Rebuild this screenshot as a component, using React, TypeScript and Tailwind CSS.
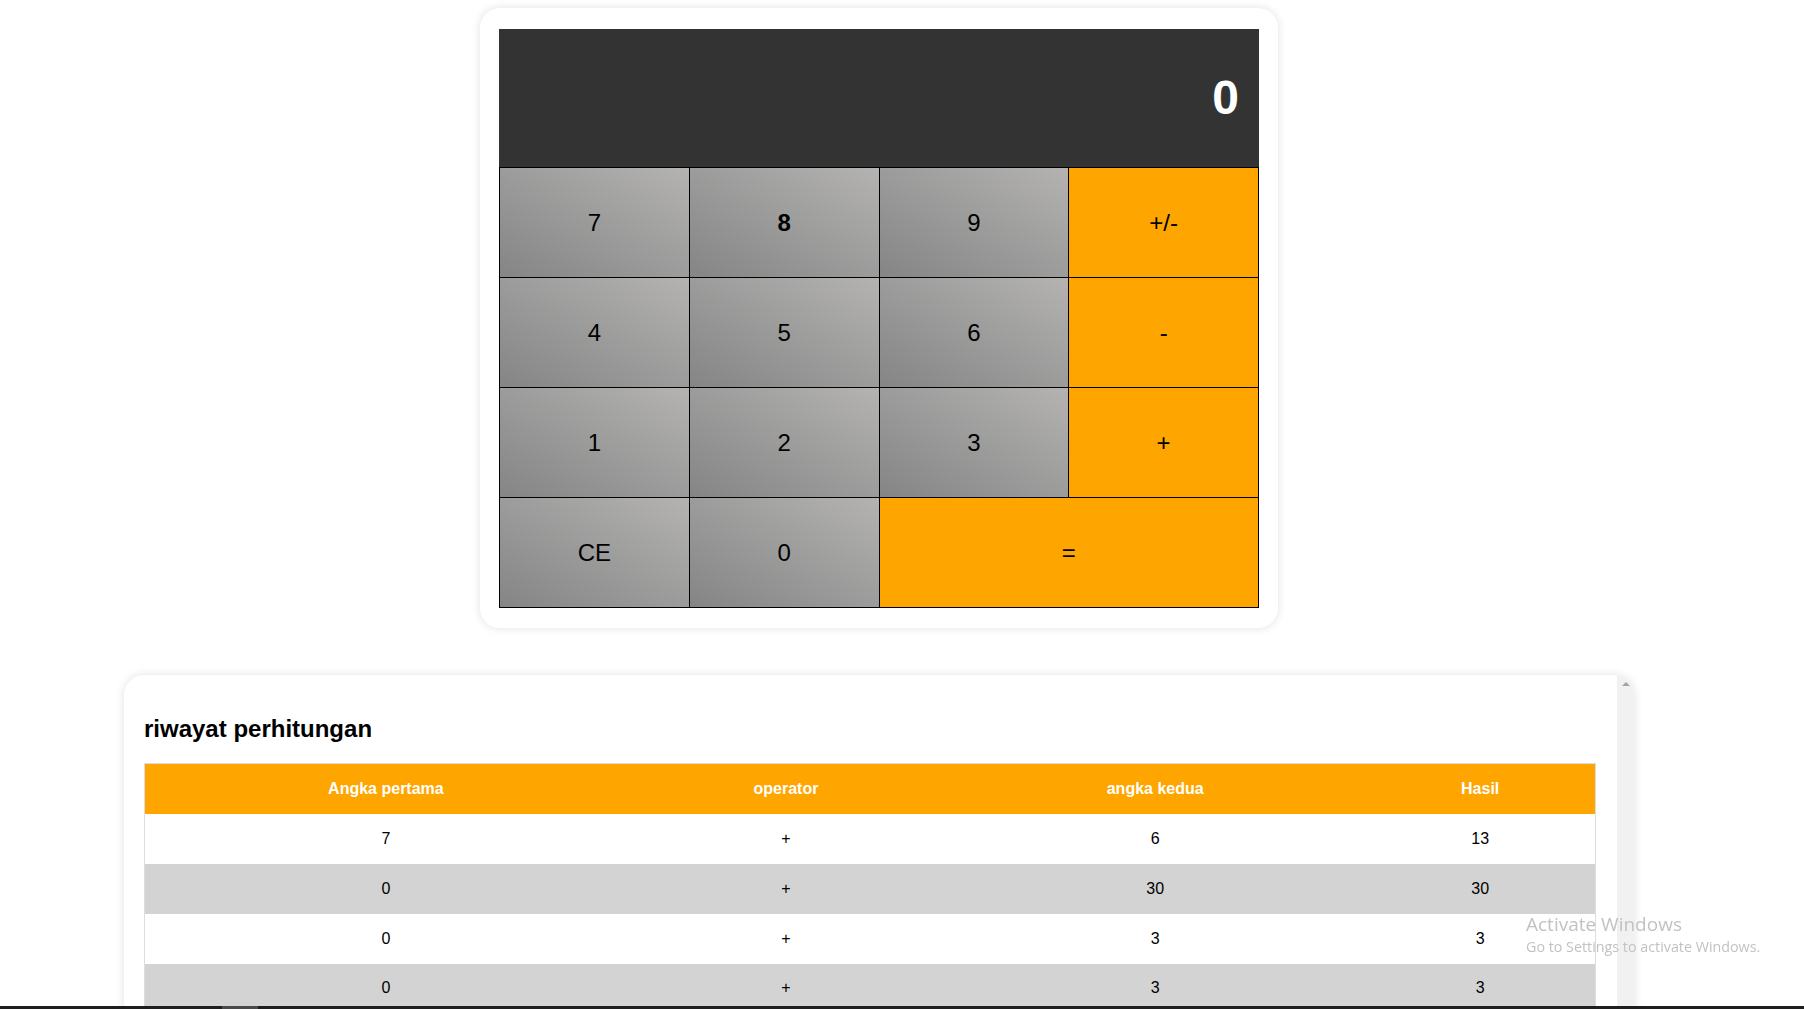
type Key = { label: string; kind: "num" | "op"; bold?: boolean; wide?: boolean };

const keys: Key[] = [
  { label: "7", kind: "num" },
  { label: "8", kind: "num", bold: true },
  { label: "9", kind: "num" },
  { label: "+/-", kind: "op" },
  { label: "4", kind: "num" },
  { label: "5", kind: "num" },
  { label: "6", kind: "num" },
  { label: "-", kind: "op" },
  { label: "1", kind: "num" },
  { label: "2", kind: "num" },
  { label: "3", kind: "num" },
  { label: "+", kind: "op" },
  { label: "CE", kind: "num" },
  { label: "0", kind: "num" },
  { label: "=", kind: "op", wide: true },
];

const history = [
  { a: "7", op: "+", b: "6", res: "13" },
  { a: "0", op: "+", b: "30", res: "30" },
  { a: "0", op: "+", b: "3", res: "3" },
  { a: "0", op: "+", b: "3", res: "3" },
];

function Calculator() {
  return (
    <div className="mt-[8px] rounded-[20px] bg-white px-[19px] pt-[21px] pb-[20px] shadow-[0_0_10px_rgba(0,0,0,0.12)]">
      <div className="flex h-[138px] w-[760px] items-center justify-end bg-[#333333] pr-[20px] text-[48px] font-bold text-white">
        0
      </div>
      <div className="grid w-[760px] grid-cols-4 grid-rows-[repeat(4,109px)] gap-px bg-black p-px">
        {keys.map((k) => (
          <button
            key={k.label}
            type="button"
            className={
              (k.kind === "op"
                ? "bg-[#ffa500] "
                : "bg-linear-to-tr from-[#858585] to-[#b4b3b2] ") +
              (k.wide ? "col-span-2 " : "") +
              (k.bold ? "font-bold " : "font-normal ") +
              "text-[24px] text-black"
            }
          >
            {k.label}
          </button>
        ))}
      </div>
    </div>
  );
}

function HistoryCard() {
  return (
    <div className="mt-[47px] flex w-[1510px] overflow-hidden rounded-tl-[20px] rounded-tr-[20px] bg-white shadow-[0_0_10px_rgba(0,0,0,0.12)]">
      <div className="flex-1 px-[20px] pt-[20px] pb-[20px]">
        <h2 className="my-[20px] text-[24px] leading-[28px] font-bold text-black">
          riwayat perhitungan
        </h2>
        <table className="w-[1452px] table-fixed border-collapse border border-[#dddddd] text-[16px]">
          <colgroup>
            <col className="w-[482px]" />
            <col className="w-[318px]" />
            <col className="w-[420px]" />
            <col className="w-[230px]" />
          </colgroup>
          <thead>
            <tr className="h-[50px] bg-[#ffa500] text-white">
              <th className="font-bold">Angka pertama</th>
              <th className="font-bold">operator</th>
              <th className="font-bold">angka kedua</th>
              <th className="font-bold">Hasil</th>
            </tr>
          </thead>
          <tbody>
            {history.map((row, i) => (
              <tr
                key={i}
                className={"h-[50px] text-center text-black " + (i % 2 === 1 ? "bg-[#d3d3d3]" : "bg-white")}
              >
                <td>{row.a}</td>
                <td>{row.op}</td>
                <td>{row.b}</td>
                <td>{row.res}</td>
              </tr>
            ))}
          </tbody>
        </table>
      </div>
      <div className="flex w-[17px] shrink-0 justify-center bg-[#f1f1f1] pt-[7px]">
        <div className="h-0 w-0 border-x-[4px] border-b-[4px] border-x-transparent border-b-[#a3a3a3]" />
      </div>
    </div>
  );
}

export default function App() {
  return (
    <div className="relative h-screen overflow-hidden bg-white font-['Liberation_Sans',Arial,sans-serif]">
      <div className="flex w-[1758px] flex-col items-center">
        <Calculator />
        <HistoryCard />
      </div>

      <div className="fixed top-[912px] left-[1526px] font-['Open_Sans','Noto_Sans',sans-serif] text-[#c2c2c2]">
        <p className="text-[19px] leading-[24px]">Activate Windows</p>
        <p className="text-[14.3px] leading-[21px]">Go to Settings to activate Windows.</p>
      </div>

      <div className="fixed right-0 bottom-0 left-0 flex h-[3px] bg-[#1e1e1e]">
        <div className="ml-[222px] w-[36px] bg-[#4a4a4a]" />
      </div>
    </div>
  );
}
